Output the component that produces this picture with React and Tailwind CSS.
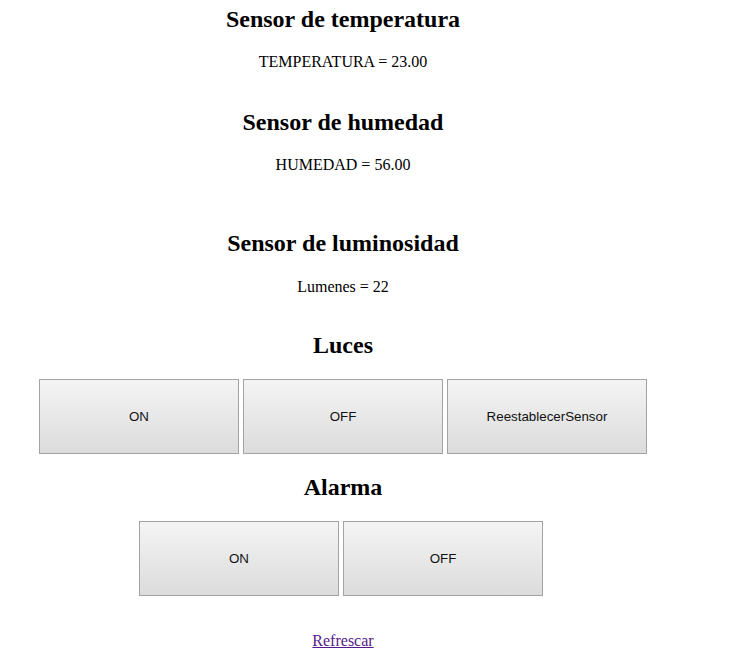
export default function App() {
  const serif = { fontFamily: '"Liberation Serif", "Times New Roman", serif' };

  const Btn = ({ label }) => (
    <button
      type="button"
      className="w-[200px] h-[75px] border border-[#a3a3a3] bg-gradient-to-b from-[#f4f4f4] to-[#dcdcdc] text-[13.33px] text-[#111] font-['Liberation_Sans',Arial,sans-serif]"
    >
      {label}
    </button>
  );

  return (
    <div className="w-[744px] h-[655px] bg-white text-black" style={serif}>
      <div className="w-[686px] text-center pt-[5px]">
        <h2 className="text-[24px] leading-[28px] font-bold">Sensor de temperatura</h2>
        <p className="mt-[20px] text-[16px] leading-[18px]">TEMPERATURA = 23.00</p>

        <h2 className="mt-[37px] text-[24px] leading-[28px] font-bold">Sensor de humedad</h2>
        <p className="mt-[20px] text-[16px] leading-[18px]">HUMEDAD = 56.00</p>

        <h2 className="mt-[55px] text-[24px] leading-[28px] font-bold">Sensor de luminosidad</h2>
        <p className="mt-[21px] text-[16px] leading-[18px]">Lumenes = 22</p>

        <h2 className="mt-[35px] text-[24px] leading-[28px] font-bold">Luces</h2>
        <div className="mt-[20px] flex justify-center gap-[4px]">
          <Btn label="ON" />
          <Btn label="OFF" />
          <Btn label="ReestablecerSensor" />
        </div>

        <h2 className="mt-[19px] text-[24px] leading-[28px] font-bold">Alarma</h2>
        <div className="mt-[20px] flex justify-center gap-[4px] pr-[4px]">
          <Btn label="ON" />
          <Btn label="OFF" />
        </div>

        <p className="mt-[36px] text-[16px] leading-[18px]">
          <a href="#" className="text-[#551a8b] underline">Refrescar</a>
        </p>
      </div>
    </div>
  );
}
